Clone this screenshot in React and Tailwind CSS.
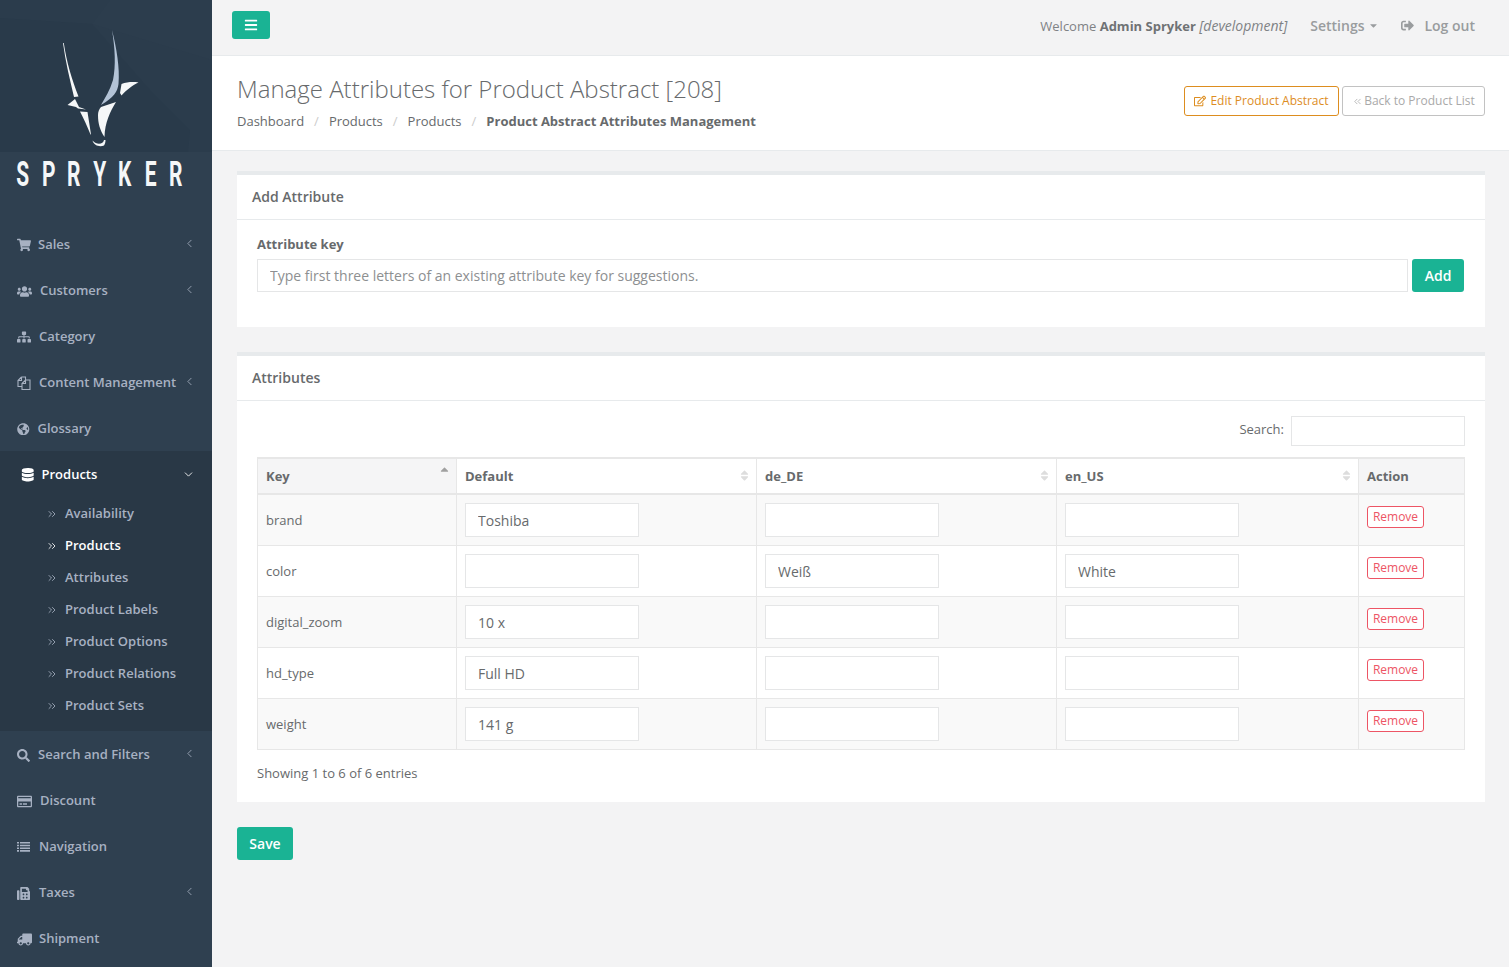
import React from 'react'
import {
  FaShoppingCart, FaUsers, FaSitemap, FaGlobeAmericas, FaDatabase,
  FaSearch, FaRegCreditCard, FaFax, FaTruck, FaBars, FaSignOutAlt, FaRegEdit,
  FaCaretDown, FaSort, FaSortUp,
} from 'react-icons/fa'
import { ChevronLeft, ChevronDown, ChevronsRight, ChevronsLeft } from 'lucide-react'

const FilesIcon = ({ className }) => (
  <svg viewBox="0 0 14 14" width="14" height="14" fill="none" stroke="currentColor" strokeWidth="1.1" className={className}>
    <path d="M4.5 1H8.5V4M4.5 1L1 4.5V10.5H5M1 4.5H4.5V1" />
    <path d="M9.5 4H13V13.5H5V7.5L8.5 4H9.5ZM5 7.5H8.5V4" />
  </svg>
)

const ListIcon = ({ className }) => (
  <svg viewBox="0 0 13 10" width="13" height="10" fill="currentColor" className={className}>
    <path d="M0 0h2v1.6H0zM3 0h10v1.6H3zM0 2.7h2v1.6H0zM3 2.7h10v1.6H3zM0 5.4h2V7H0zM3 5.4h10V7H3zM0 8.1h2v1.6H0zM3 8.1h10v1.6H3z" />
  </svg>
)

const TruckFlipped = ({ className }) => <FaTruck className={`-scale-x-100 ${className}`} />

const TOP_NAV = [
  { icon: FaShoppingCart, name: 'Sales', box: 'w-[21px]', size: 'text-[14px]', arrow: true },
  { icon: FaUsers, name: 'Customers', box: 'w-[23px]', size: 'text-[15px]', arrow: true },
  { icon: FaSitemap, name: 'Category', box: 'w-[22px]', size: 'text-[14px]' },
  { icon: FilesIcon, name: 'Content Management', box: 'w-[22px]', size: '', arrow: true },
  { icon: FaGlobeAmericas, name: 'Glossary', box: 'w-[20.5px]', size: 'text-[12.5px]' },
]

const SUB_NAV = ['Availability', 'Products', 'Attributes', 'Product Labels', 'Product Options', 'Product Relations', 'Product Sets']

const BOTTOM_NAV = [
  { icon: FaSearch, name: 'Search and Filters', box: 'w-[21px]', size: 'text-[13px]', arrow: true },
  { icon: FaRegCreditCard, name: 'Discount', box: 'w-[23px]', size: 'text-[15px]' },
  { icon: ListIcon, name: 'Navigation', box: 'w-[22px]', size: '' },
  { icon: FaFax, name: 'Taxes', box: 'w-[22px]', size: 'text-[13px]', arrow: true },
  { icon: TruckFlipped, name: 'Shipment', box: 'w-[22px]', size: 'text-[15px]' },
]

const ROWS = [
  { key: 'brand', def: 'Toshiba', de: '', en: '' },
  { key: 'color', def: '', de: 'Weiß', en: 'White' },
  { key: 'digital_zoom', def: '10 x', de: '', en: '' },
  { key: 'hd_type', def: 'Full HD', de: '', en: '' },
  { key: 'weight', def: '141 g', de: '', en: '' },
]

const cellInput = 'block w-[174px] h-[34px] px-3 pt-[2px] border border-[#e5e6e7] bg-white text-[14px] text-[#676a6c] outline-none'
const thCls = 'relative h-[36px] px-2 pt-[2px] text-left font-bold border border-[#e7e7e7] border-b-2 border-t-2 align-middle'
const tdCls = 'h-[51px] px-2 border border-[#e7e7e7] align-middle'

function NavItem({ icon: Icon, name, box, size, arrow }) {
  return (
    <li className="flex items-center h-[46px] pl-[17px] pr-[16px] pt-[2px]">
      <span className={`${box} shrink-0`}><Icon className={size} /></span>
      <span className="flex-1">{name}</span>
      {arrow && <ChevronLeft size={13} strokeWidth={1.5} className="-mt-[3px]" />}
    </li>
  )
}

function Logo() {
  return (
    <svg viewBox="0 0 212 152" className="block w-[212px] h-[152px]">
      <rect width="212" height="152" fill="#2b3c4c" />
      <polygon points="92,24 150,90 190,130 188,152 0,152 0,18" fill="#293a4a" />
      <polygon points="92,24 110,0 212,0 212,60" fill="#2c3d4d" />
      <path d="M63 43 C65.5 62 70 80 74 97 L78.5 96.5 C72 80 66.5 62 63.8 43Z" fill="#f5f7f8" />
      <path d="M67.5 105 L75 99 L79 107 L86 109.5 L78 108.5 L76 107 Z" fill="#f5f7f8" />
      <path d="M80 111.5 L87.5 112 L91 134.5 L90.5 134.5 C87 126 83.5 118 80 111.5Z" fill="#f5f7f8" />
      <path d="M112 30 C116.5 48 120 68 118.5 84 C117.5 92 114 97 101 105 C105 98 110 90 113 80 C116 66 115 48 112 30Z" fill="#b3c3d6" />
      <path d="M121.5 84 C127 82 133 81.5 138.5 82.5 C133 85 126 90 121.5 95.5 L120 93Z" fill="#f5f7f8" />
      <path d="M101 107 L116 102 C110 112 105 122 104.5 137 C100 130 98 124 98 115 C98 112 99 109 101 107Z" fill="#f5f7f8" />
      <path d="M92.5 140.5 C94 146 100 147 104 145.5 C105 144 105.5 142 105.5 140 L104 140 C103.5 144 97 145.5 92.5 140.5Z" fill="#f5f7f8" />
    </svg>
  )
}

function Panel({ title, children }) {
  return (
    <section className="bg-white border-t-4 border-[#e7eaec]">
      <h5 className="h-[45px] flex items-center px-[15px] pb-[2px] border-b border-[#e7eaec] text-[14px] font-semibold">{title}</h5>
      {children}
    </section>
  )
}

function Th({ label, sort, grey, w }) {
  return (
    <th className={`${thCls} ${w} ${grey ? 'bg-[#f5f5f6]' : ''}`}>
      {label}
      {sort === 'up' && <FaSortUp className="absolute top-[7px] right-[5px] text-[13px] text-[#a0a0a0]" />}
      {sort === 'both' && <FaSort className="absolute top-[10px] right-[5px] text-[13px] text-[#dddddd]" />}
    </th>
  )
}

export default function App() {
  return (
    <div className="flex h-[967px] overflow-hidden bg-[#f3f3f4] text-[13px] text-[#676a6c] font-['Open_Sans',sans-serif]">
      {/* Sidebar */}
      <aside className="w-[212px] shrink-0 bg-[#2f4050] text-[#a7b1c2] font-semibold">
        <Logo />
        <div className="flex h-[69px] pt-[1px] pl-[10px] text-[#f5f7f8] font-['Roboto',sans-serif] font-bold">
          {'SPRYKER'.split('').map((c, i) => (
            <span key={i} className="w-[25.5px] text-center text-[35px] leading-[43px] scale-x-[0.6]">{c}</span>
          ))}
        </div>
        <ul>
          {TOP_NAV.map(item => <NavItem key={item.name} {...item} />)}
        </ul>
        <div className="bg-[#293846] pb-[10px]">
          <div className="flex items-center h-[46px] pl-[21px] pr-[17px] pt-[2px] text-white">
            <span className="w-[20.5px] shrink-0"><FaDatabase className="text-[13.5px]" /></span>
            <span className="flex-1">Products</span>
            <ChevronDown size={13} strokeWidth={1.6} className="-mt-[1px]" />
          </div>
          <ul>
            {SUB_NAV.map(name => (
              <li key={name} className={`flex items-center h-[32px] pl-[46px] pt-[2px] ${name === 'Products' ? 'text-white' : ''}`}>
                <span className="w-[19px] shrink-0"><ChevronsRight size={12} strokeWidth={1.7} /></span>
                {name}
              </li>
            ))}
          </ul>
        </div>
        <ul>
          {BOTTOM_NAV.map(item => <NavItem key={item.name} {...item} />)}
        </ul>
      </aside>

      {/* Main */}
      <main className="flex-1 min-w-0">
        <header className="h-[56px] border-b border-[#e7eaec] flex items-center pl-[20px] pr-[34px] pb-[2px]">
          <button className="w-[38px] h-[28px] -mt-[3px] flex items-center justify-center rounded-[3px] bg-[#1ab394] text-white">
            <FaBars className="text-[14px]" />
          </button>
          <div className="ml-auto flex items-center">
            <span className="pb-[2px] text-[#7f8285]">Welcome <b className="font-bold text-[#6f7274]">Admin Spryker</b> <i className="text-[14px]">[development]</i></span>
            <span className="ml-[23px] pb-[2px] flex items-center text-[14px] font-semibold text-[#999c9e]">Settings<FaCaretDown className="ml-[4px] text-[11px]" /></span>
            <span className="ml-[22px] pb-[2px] flex items-center text-[14px] font-semibold text-[#999c9e]"><FaSignOutAlt className="mr-[10px] text-[13px]" />Log out</span>
          </div>
        </header>

        <div className="h-[95px] bg-white border-b border-[#e7eaec] flex justify-between pl-[25px] pr-[24px]">
          <div>
            <h2 className="mt-[16px] text-[24px] leading-[34px] font-light">Manage Attributes for Product Abstract [208]</h2>
            <ol className="flex mt-[6px] leading-[18px]">
              <li>Dashboard</li>
              <li className="px-[10px] text-[#ccc]">/</li>
              <li>Products</li>
              <li className="px-[10px] text-[#ccc]">/</li>
              <li>Products</li>
              <li className="px-[10px] text-[#ccc]">/</li>
              <li className="font-bold">Product Abstract Attributes Management</li>
            </ol>
          </div>
          <div className="flex gap-[3px] mt-[30px] text-[12px]">
            <button className="h-[30px] w-[155px] flex items-center justify-center gap-[4px] rounded-[3px] border border-[#dd8d1f] bg-white text-[#dd8d1f]">
              <FaRegEdit className="text-[12px]" />Edit Product Abstract
            </button>
            <button className="h-[30px] w-[143px] flex items-center justify-center gap-[1px] rounded-[3px] border border-[#c2c2c2] bg-white text-[#a9a9a9]">
              <ChevronsLeft size={11} strokeWidth={1.7} />Back to Product List
            </button>
          </div>
        </div>

        <div className="pl-[25px] pr-[24px] pt-[20px]">
          <Panel title="Add Attribute">
            <div className="h-[107px] pt-[15px] px-[20px] pr-[21px]">
              <label className="block font-bold leading-[18px] mb-[6px]">Attribute key</label>
              <div className="flex gap-[4px]">
                <input className="flex-1 h-[33px] px-3 border border-[#e5e6e7] text-[14px] outline-none placeholder:text-[#8d8f91]" placeholder="Type first three letters of an existing attribute key for suggestions." />
                <button className="w-[52px] h-[33px] rounded-[3px] bg-[#1ab394] text-white text-[14px] font-semibold">Add</button>
              </div>
            </div>
          </Panel>

          <div className="h-[25px]" />

          <Panel title="Attributes">
            <div className="h-[401px] px-[20px] pt-[15px]">
              <div className="flex justify-end items-center gap-[7px]">
                <span className="pb-[2px]">Search:</span>
                <input className="w-[174px] h-[30px] border border-[#e5e6e7] outline-none" />
              </div>
              <table className="w-[1207px] mt-[11px] table-fixed border-collapse">
                <thead>
                  <tr>
                    <Th label="Key" sort="up" grey w="w-[199px]" />
                    <Th label="Default" sort="both" w="w-[300px]" />
                    <Th label="de_DE" sort="both" w="w-[300px]" />
                    <Th label="en_US" sort="both" w="w-[302px]" />
                    <Th label="Action" grey w="w-[106px]" />
                  </tr>
                </thead>
                <tbody>
                  {ROWS.map((r, i) => (
                    <tr key={r.key} className={i % 2 === 0 ? 'bg-[#f9f9f9]' : ''}>
                      <td className={`${tdCls} pt-[2px]`}>{r.key}</td>
                      <td className={tdCls}><input className={cellInput} defaultValue={r.def} /></td>
                      <td className={tdCls}><input className={cellInput} defaultValue={r.de} /></td>
                      <td className={tdCls}><input className={cellInput} defaultValue={r.en} /></td>
                      <td className={tdCls}>
                        <button className="block w-[57px] h-[22px] -mt-[5px] rounded-[3px] border border-[#ed5565] bg-white text-[#ed5565] text-[12px]">Remove</button>
                      </td>
                    </tr>
                  ))}
                </tbody>
              </table>
              <p className="mt-[14px] leading-[18px]">Showing 1 to 6 of 6 entries</p>
            </div>
          </Panel>

          <button className="mt-[25px] w-[56px] h-[33px] rounded-[3px] bg-[#1ab394] text-white text-[14px] font-semibold">Save</button>
        </div>
      </main>
    </div>
  )
}
